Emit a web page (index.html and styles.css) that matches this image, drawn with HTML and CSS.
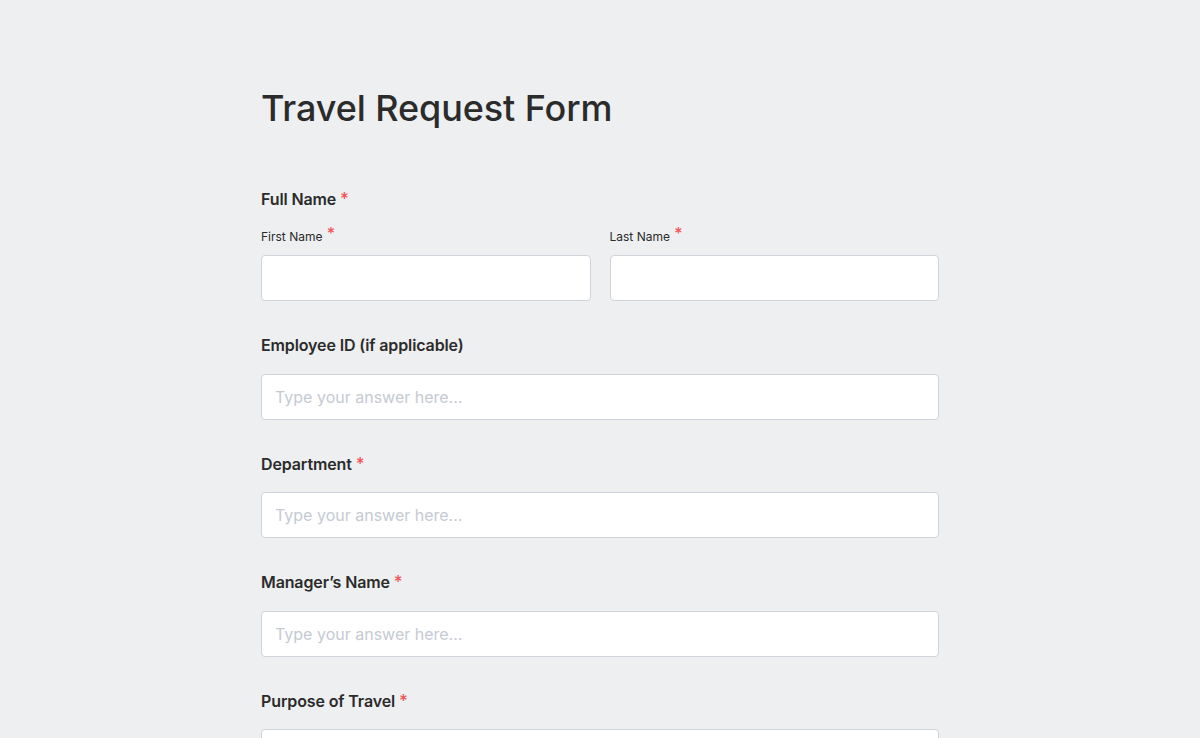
FILE: index.html
```html
<!DOCTYPE html>
<html lang="en">
<head>
<meta charset="utf-8">
<title>Travel Request Form</title>
<link rel="stylesheet" href="styles.css">
</head>
<body>
<main class="form-wrap">
  <h1 class="title">Travel Request Form</h1>
  <form class="form">
    <div class="field">
      <div class="label">Full Name <span class="req">*</span></div>
      <div class="row">
        <div class="sub">
          <label class="sublabel">First Name <span class="req req-sub">*</span></label>
          <input class="input" type="text">
        </div>
        <div class="sub">
          <label class="sublabel">Last Name <span class="req req-sub">*</span></label>
          <input class="input" type="text">
        </div>
      </div>
    </div>
    <div class="field">
      <label class="label">Employee ID (if applicable)</label>
      <input class="input" type="text" placeholder="Type your answer here...">
    </div>
    <div class="field">
      <label class="label">Department <span class="req">*</span></label>
      <input class="input" type="text" placeholder="Type your answer here...">
    </div>
    <div class="field">
      <label class="label">Manager’s Name <span class="req">*</span></label>
      <input class="input" type="text" placeholder="Type your answer here...">
    </div>
    <div class="field">
      <label class="label">Purpose of Travel <span class="req">*</span></label>
      <input class="input" type="text" placeholder="Type your answer here...">
    </div>
  </form>
</main>
</body>
</html>
```
FILE: styles.css
```css
* { box-sizing: border-box; }
html, body {
  margin: 0;
  padding: 0;
  background: #eeeff1;
  font-family: Inter, "Noto Sans", "Liberation Sans", sans-serif;
  color: #2b2b2b;
}
.form-wrap {
  width: 678px;
  margin: 0 auto;
  padding-top: 84px;
}
.title {
  margin: 0 0 55px;
  font-size: 36px;
  line-height: 48px;
  font-weight: 500;
  color: #2b2b2b;
  letter-spacing: -0.1px;
}
.form {
  display: flex;
  flex-direction: column;
  gap: 32px;
}
.field {
  display: flex;
  flex-direction: column;
}
.label {
  display: block;
  font-size: 16px;
  line-height: 24px;
  font-weight: 600;
  margin-bottom: 16.5px;
  color: #2b2b2b;
  letter-spacing: -0.12px;
}
.req {
  color: #f25555;
  font-weight: 500;
  font-size: 17px;
}
.row {
  display: flex;
  gap: 19px;
}
.sub {
  flex: 1;
  display: flex;
  flex-direction: column;
}
.sublabel {
  font-size: 12px;
  line-height: 20px;
  margin-top: -0.5px;
  margin-bottom: 8px;
  color: #2b2b2b;
}
.req-sub {
  font-size: 16px;
  line-height: 12px;
  vertical-align: 2px;
  margin-left: 1px;
}
.input {
  width: 100%;
  height: 46px;
  border: 1px solid #cfd3da;
  border-radius: 4px;
  background: #fff;
  padding: 0 13px;
  font-family: inherit;
  font-size: 16px;
  color: #2b2b2b;
  outline: none;
}
.input::placeholder {
  color: #c5cad3;
}
```
